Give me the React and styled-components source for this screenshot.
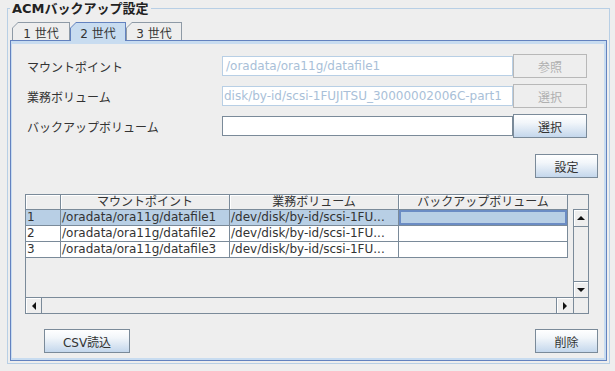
import React from 'react';
import styled, { createGlobalStyle } from 'styled-components';

const GlobalStyle = createGlobalStyle`
  html, body {
    margin: 0;
    padding: 0;
    background: #eeeeee;
  }
  body {
    font-family: "DejaVu Sans", "Noto Sans CJK JP", sans-serif;
    font-size: 12px;
    color: #333333;
  }
  * {
    box-sizing: border-box;
  }
`;

const Group = styled.fieldset`
  margin: 0 5px 0 7px;
  padding: 5px 2px 2px 2px;
  border: 1px solid #b8cfe5;
  min-width: 0;
`;

const Legend = styled.legend`
  padding: 0 2px;
  font-size: 13px;
  line-height: 17px;
  font-weight: bold;
  color: #222222;
`;

const TabRow = styled.div`
  display: flex;
  align-items: flex-start;
  height: 19px;
  margin: 0 0 -1px 2px;
  position: relative;
  z-index: 1;
`;

const TabShape = styled.div`
  width: ${p => p.$w}px;
  height: ${p => (p.$active ? 19 : 18)}px;
  padding: 1px 1px 0 1px;
  background: ${p => (p.$active ? '#6382bf' : '#8e9aa6')};
  clip-path: polygon(0 6px, 6px 0, 100% 0, 100% 100%, 0 100%);
`;

const TabFace = styled.div`
  height: 100%;
  display: flex;
  align-items: center;
  justify-content: center;
  background: ${p => (p.$active ? '#c8dcf0' : '#eeeeee')};
  clip-path: polygon(0 5px, 5px 0, 100% 0, 100% 100%, 0 100%);
  font-size: 12px;
  color: #333333;
  padding-top: 1px;
`;

const Panel = styled.div`
  border: 1px solid #6382bf;
  box-shadow: inset 1px 3px 0 #c8dcf0, inset -2px -2px 0 #c8dcf0;
  padding: 13px 8px 7px 16px;
`;

const Form = styled.div`
  display: grid;
  grid-template-columns: 195px 291px 74px;
  grid-auto-rows: 24px;
  row-gap: 6px;
  align-items: center;
`;

const Label = styled.div`
  font-size: 12px;
  color: #333333;
`;

const Field = styled.div`
  height: 20px;
  display: flex;
  align-items: center;
  overflow: hidden;
  white-space: nowrap;
  padding: 0 2px 0 ${p => (p.$tight ? 1 : 3)}px;
  background: #ffffff;
  border: 1px solid ${p => (p.$disabled ? '#b8cfe5' : '#7a8a99')};
  color: ${p => (p.$disabled ? '#a9bfd8' : '#333333')};
  font-size: 12px;
`;

const Button = styled.div`
  width: ${p => p.$w}px;
  height: 24px;
  display: flex;
  align-items: center;
  justify-content: center;
  font-size: 12px;
  border: 1px solid ${p => (p.$disabled ? '#b8b8b8' : '#7a8a99')};
  color: ${p => (p.$disabled ? '#b0b0b0' : '#333333')};
  background: ${p =>
    p.$disabled
      ? '#eeeeee'
      : 'linear-gradient(to bottom, #ffffff 0%, #f2f6fa 35%, #c4d7ec 100%)'};
`;

const SetRow = styled.div`
  display: flex;
  justify-content: flex-end;
  margin-top: 16px;
`;

const ScrollPane = styled.div`
  width: 564px;
  height: 120px;
  margin: 16px 0 0 -2px;
  border: 1px solid #7a8a99;
  display: grid;
  grid-template-columns: 547px 15px;
  grid-template-rows: 15px 87px 16px;
`;

const Header = styled.div`
  display: grid;
  grid-template-columns: 35px 169px 169px 169px;
  width: 542px;
`;

const HeadCell = styled.div`
  height: 15px;
  border-right: 1px solid #7a8a99;
  border-bottom: 1px solid #7a8a99;
  box-shadow: inset 1px 1px 0 #ffffff;
  background: #eeeeee;
  font-size: 12px;
  line-height: 14px;
  text-align: center;
  color: #333333;
  white-space: nowrap;
  overflow: hidden;
`;

const HeadCorner = styled.div`
  border-bottom: 1px solid #7a8a99;
`;

const Body = styled.div`
  background: #eeeeee;
  overflow: hidden;
`;

const Row = styled.div`
  display: grid;
  grid-template-columns: 35px 169px 169px 169px;
  width: 542px;
  background: ${p => (p.$selected ? '#b8cfe5' : '#ffffff')};
`;

const Cell = styled.div`
  height: 16px;
  padding-left: 1px;
  border-right: 1px solid #7a8a99;
  border-bottom: 1px solid #7a8a99;
  font-size: 12px;
  line-height: 15px;
  color: #333333;
  white-space: nowrap;
  overflow: hidden;
  box-shadow: ${p => (p.$focus ? 'inset 0 0 0 2px #6b8cc4' : 'none')};
`;

const VBar = styled.div`
  display: flex;
  flex-direction: column;
  border-left: 1px solid #7a8a99;
`;

const HBar = styled.div`
  display: flex;
  border-top: 1px solid #7a8a99;
`;

const Track = styled.div`
  flex: 1;
  background: #eeeeee;
`;

const ArrowButton = styled.div`
  flex: none;
  width: ${p => p.$w}px;
  height: ${p => p.$h}px;
  display: flex;
  align-items: center;
  justify-content: center;
  background: #eeeeee;
  box-shadow: inset 1px 1px 0 #ffffff;
  ${p => p.$side === 'top' && 'border-bottom: 1px solid #7a8a99;'}
  ${p => p.$side === 'bottom' && 'border-top: 1px solid #7a8a99;'}
  ${p => p.$side === 'left' && 'border-right: 1px solid #7a8a99;'}
  ${p => p.$side === 'right' && 'border-left: 1px solid #7a8a99;'}
`;

const Corner = styled.div`
  border-left: 1px solid #7a8a99;
  border-top: 1px solid #7a8a99;
`;

const BottomRow = styled.div`
  display: flex;
  justify-content: space-between;
  margin-top: 15px;
  padding-left: 17px;
`;

const Arrow = ({ dir }) => {
  const pts = {
    up: '0,4 8,4 4,0',
    down: '0,0 8,0 4,4',
    left: '4,0 4,8 0,4',
    right: '0,0 0,8 4,4',
  }[dir];
  const vertical = dir === 'up' || dir === 'down';
  return (
    <svg
      width={vertical ? 8 : 4}
      height={vertical ? 4 : 8}
      viewBox={vertical ? '0 0 8 4' : '0 0 4 8'}
    >
      <polygon points={pts} fill="#111111" />
    </svg>
  );
};

const tabs = [
  { label: '1 世代', w: 58 },
  { label: '2 世代', w: 56, active: true },
  { label: '3 世代', w: 56 },
];

const rows = [
  { n: '1', mount: '/oradata/ora11g/datafile1', vol: '/dev/disk/by-id/scsi-1FU...' },
  { n: '2', mount: '/oradata/ora11g/datafile2', vol: '/dev/disk/by-id/scsi-1FU...' },
  { n: '3', mount: '/oradata/ora11g/datafile3', vol: '/dev/disk/by-id/scsi-1FU...' },
];

const App = () => {
  return (
    <>
      <GlobalStyle />
      <Group>
        <Legend>ACMバックアップ設定</Legend>
        <TabRow>
          {tabs.map(t => (
            <TabShape key={t.label} $w={t.w} $active={t.active}>
              <TabFace $active={t.active}>{t.label}</TabFace>
            </TabShape>
          ))}
        </TabRow>
        <Panel>
          <Form>
            <Label>マウントポイント</Label>
            <Field $disabled>/oradata/ora11g/datafile1</Field>
            <Button $w={74} $disabled>参照</Button>

            <Label>業務ボリューム</Label>
            <Field $disabled $tight>
              disk/by-id/scsi-1FUJITSU_30000002006C-part1
            </Field>
            <Button $w={74} $disabled>選択</Button>

            <Label>バックアップボリューム</Label>
            <Field />
            <Button $w={74}>選択</Button>
          </Form>

          <SetRow>
            <Button $w={63}>設定</Button>
          </SetRow>

          <ScrollPane>
            <Header>
              <HeadCell />
              <HeadCell>マウントポイント</HeadCell>
              <HeadCell>業務ボリューム</HeadCell>
              <HeadCell>バックアップボリューム</HeadCell>
            </Header>
            <HeadCorner />
            <Body>
              {rows.map((r, i) => (
                <Row key={r.n} $selected={i === 0}>
                  <Cell>{r.n}</Cell>
                  <Cell>{r.mount}</Cell>
                  <Cell>{r.vol}</Cell>
                  <Cell $focus={i === 0} />
                </Row>
              ))}
            </Body>
            <VBar>
              <ArrowButton $w={14} $h={17} $side="top">
                <Arrow dir="up" />
              </ArrowButton>
              <Track />
              <ArrowButton $w={14} $h={16} $side="bottom">
                <Arrow dir="down" />
              </ArrowButton>
            </VBar>
            <HBar>
              <ArrowButton $w={16} $h={15} $side="left">
                <Arrow dir="left" />
              </ArrowButton>
              <Track />
              <ArrowButton $w={17} $h={15} $side="right">
                <Arrow dir="right" />
              </ArrowButton>
            </HBar>
            <Corner />
          </ScrollPane>

          <BottomRow>
            <Button $w={86}>CSV読込</Button>
            <Button $w={63}>削除</Button>
          </BottomRow>
        </Panel>
      </Group>
    </>
  );
};

export default App;
